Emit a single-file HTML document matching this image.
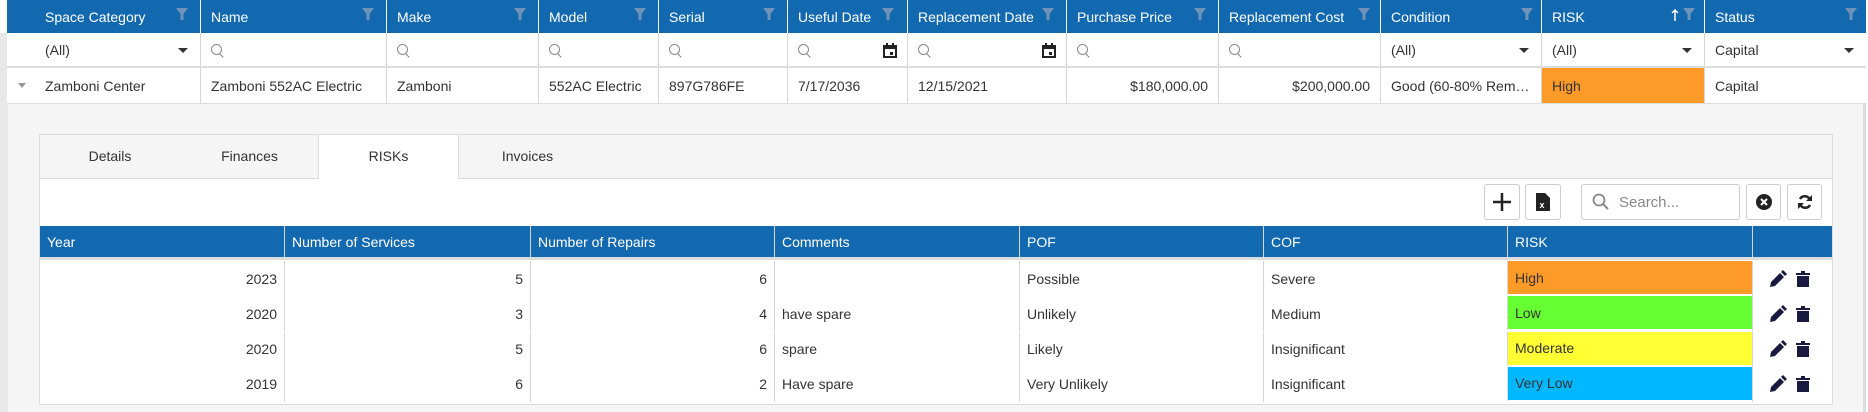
<!DOCTYPE html>
<html><head><style>
*{box-sizing:border-box;margin:0;padding:0}
body{width:1868px;height:412px;overflow:hidden;background:#fff;font-family:"Liberation Sans",sans-serif;font-size:14px;color:#333;position:relative}
.a{position:absolute}
.hd{background:#1369b0;color:#fff}
.c{position:absolute;top:0;height:100%;display:flex;align-items:center;padding-left:10px;white-space:nowrap;overflow:hidden}
.bl{border-left:1px solid #d6d6d6}
.hb{border-left:1px solid #fff}
.q{width:11px;height:11px;border:1.3px solid #888;border-radius:50%;position:relative}
.q:after{content:"";position:absolute;width:1.3px;height:5px;background:#888;left:9px;top:8px;transform:rotate(-45deg)}
.dd{position:absolute;right:12px;top:15px;border-left:5px solid transparent;border-right:5px solid transparent;border-top:5px solid #333}
.r{justify-content:flex-end;padding-right:10px}
.btn{position:absolute;top:184px;height:36px;border:1px solid #ccc;border-radius:3px;background:#fff;display:flex;align-items:center;justify-content:center}
</style></head><body>
<div class="a hd" style="left:7px;top:0;width:1859px;height:33px">
<div class="c" style="left:0;width:193px;padding-left:38px">Space Category</div>
<div class="c hb" style="left:193px;width:186px">Name</div>
<div class="c hb" style="left:379px;width:152px">Make</div>
<div class="c hb" style="left:531px;width:120px">Model</div>
<div class="c hb" style="left:651px;width:129px">Serial</div>
<div class="c hb" style="left:780px;width:120px">Useful Date</div>
<div class="c hb" style="left:900px;width:159px">Replacement Date</div>
<div class="c hb" style="left:1059px;width:152px">Purchase Price</div>
<div class="c hb" style="left:1211px;width:162px">Replacement Cost</div>
<div class="c hb" style="left:1373px;width:161px">Condition</div>
<div class="c hb" style="left:1534px;width:163px">RISK</div>
<div class="c hb" style="left:1697px;width:162px">Status</div>
</div>
<svg class="a" style="left:0;top:0" width="1868" height="33">
<g fill="#6f93b8">
<path d="M176 8h12l-4.5 6v6h-3v-6z"/><path d="M362 8h12l-4.5 6v6h-3v-6z"/><path d="M514 8h12l-4.5 6v6h-3v-6z"/><path d="M634 8h12l-4.5 6v6h-3v-6z"/><path d="M763 8h12l-4.5 6v6h-3v-6z"/><path d="M882 8h12l-4.5 6v6h-3v-6z"/><path d="M1042 8h12l-4.5 6v6h-3v-6z"/><path d="M1194 8h12l-4.5 6v6h-3v-6z"/><path d="M1358 8h12l-4.5 6v6h-3v-6z"/><path d="M1521 8h12l-4.5 6v6h-3v-6z"/><path d="M1683 8h12l-4.5 6v6h-3v-6z"/><path d="M1845 8h12l-4.5 6v6h-3v-6z"/>
</g>
<path d="M1675 10v11M1672 13l3-3 3 3" stroke="#fff" stroke-width="1.5" fill="none"/>
</svg>
<div class="a" style="left:0;top:33px;width:8px;height:379px;background:#e8e8e8"></div>
<div class="a" style="left:7px;top:33px;width:1859px;height:35px;background:#fff;border-bottom:2px solid #ddd">
<div class="c" style="left:0;width:193px;padding-left:38px">(All)<span class="dd"></span></div>
<div class="c bl" style="left:193px;width:186px"><span class="q"></span></div>
<div class="c bl" style="left:379px;width:152px"><span class="q"></span></div>
<div class="c bl" style="left:531px;width:120px"><span class="q"></span></div>
<div class="c bl" style="left:651px;width:129px"><span class="q"></span></div>
<div class="c bl" style="left:780px;width:120px"><span class="q"></span><svg style="position:absolute;right:10px;top:10px" width="14" height="15"><rect x="1" y="3" width="12" height="11" fill="none" stroke="#222" stroke-width="2"/><rect x="1" y="2" width="12" height="4" fill="#222"/><rect x="3" y="0" width="2" height="3" fill="#222"/><rect x="9" y="0" width="2" height="3" fill="#222"/><rect x="7" y="9" width="3" height="3" fill="#222"/></svg></div>
<div class="c bl" style="left:900px;width:159px"><span class="q"></span><svg style="position:absolute;right:10px;top:10px" width="14" height="15"><rect x="1" y="3" width="12" height="11" fill="none" stroke="#222" stroke-width="2"/><rect x="1" y="2" width="12" height="4" fill="#222"/><rect x="3" y="0" width="2" height="3" fill="#222"/><rect x="9" y="0" width="2" height="3" fill="#222"/><rect x="7" y="9" width="3" height="3" fill="#222"/></svg></div>
<div class="c bl" style="left:1059px;width:152px"><span class="q"></span></div>
<div class="c bl" style="left:1211px;width:162px"><span class="q"></span></div>
<div class="c bl" style="left:1373px;width:161px">(All)<span class="dd"></span></div>
<div class="c bl" style="left:1534px;width:163px">(All)<span class="dd"></span></div>
<div class="c bl" style="left:1697px;width:162px">Capital<span class="dd"></span></div>
</div>
<div class="a" style="left:7px;top:68px;width:1859px;height:36px;background:#fff;border-bottom:1px solid #ddd">
<div class="c" style="left:0;width:193px;padding-left:38px">Zamboni Center</div>
<span class="a" style="left:11px;top:15px;border-left:4px solid transparent;border-right:4px solid transparent;border-top:5px solid #999"></span>
<div class="c bl" style="left:193px;width:186px">Zamboni 552AC Electric</div>
<div class="c bl" style="left:379px;width:152px">Zamboni</div>
<div class="c bl" style="left:531px;width:120px">552AC Electric</div>
<div class="c bl" style="left:651px;width:129px">897G786FE</div>
<div class="c bl" style="left:780px;width:120px">7/17/2036</div>
<div class="c bl" style="left:900px;width:159px">12/15/2021</div>
<div class="c bl r" style="left:1059px;width:152px">$180,000.00</div>
<div class="c bl r" style="left:1211px;width:162px">$200,000.00</div>
<div class="c bl" style="left:1373px;width:161px">Good (60-80% Rem…</div>
<div class="c bl" style="left:1534px;width:163px;background:#fe9a28">High</div>
<div class="c bl" style="left:1697px;width:162px">Capital</div>
</div>
<div class="a" style="left:8px;top:104px;width:1858px;height:308px;background:#f5f5f5;border-right:3px solid #ddd"></div>
<div class="a" style="left:39px;top:134px;width:1794px;height:271px;border:1px solid #ddd;background:#f5f5f5"></div>
<div class="a" style="left:39px;top:178px;width:1794px;height:1px;background:#ddd"></div>
<div class="a" style="left:318px;top:134px;width:141px;height:45px;background:#fff;border:1px solid #ddd;border-bottom:none"></div>
<div class="a" style="left:39px;top:148px;width:142px;text-align:center">Details</div>
<div class="a" style="left:181px;top:148px;width:137px;text-align:center">Finances</div>
<div class="a" style="left:318px;top:148px;width:141px;text-align:center">RISKs</div>
<div class="a" style="left:459px;top:148px;width:137px;text-align:center">Invoices</div>
<div class="a" style="left:40px;top:179px;width:1792px;height:47px;background:#fff"></div>
<div class="btn" style="left:1484px;width:36px"><svg width="20" height="20"><path d="M10 1v18M1 10h18" stroke="#222" stroke-width="2.5"/></svg></div>
<div class="btn" style="left:1525px;width:36px"><svg width="14" height="18"><path d="M0 0h9l5 5v13H0z" fill="#222"/><text x="3.5" y="15" font-size="9" fill="#fff" font-family="Liberation Sans" font-weight="bold">x</text></svg></div>
<div class="btn" style="left:1581px;width:159px;justify-content:flex-start;padding-left:10px;color:#888;font-size:15px"><svg width="18" height="18" style="margin-right:9px"><circle cx="7" cy="7" r="5.5" fill="none" stroke="#888" stroke-width="1.8"/><path d="M11 11l5 5" stroke="#888" stroke-width="2"/></svg>Search...</div>
<div class="btn" style="left:1746px;width:35px"><svg width="16" height="16"><circle cx="8" cy="8" r="8" fill="#222"/><path d="M5 5l6 6M11 5l-6 6" stroke="#fff" stroke-width="2"/></svg></div>
<div class="btn" style="left:1787px;width:35px"><svg width="16" height="16"><path d="M13 6A5.5 5.5 0 0 0 3 5M3 10a5.5 5.5 0 0 0 10 1" fill="none" stroke="#222" stroke-width="2.5"/><path d="M15 1v6h-6zM1 15V9h6z" fill="#222"/></svg></div>
<div class="a hd" style="left:40px;top:226px;width:1792px;height:34px;border-bottom:3px solid #ddd">
<div class="c" style="left:0;width:244px;padding-left:7px">Year</div>
<div class="c bl" style="left:244px;width:246px;padding-left:7px">Number of Services</div>
<div class="c bl" style="left:490px;width:244px;padding-left:7px">Number of Repairs</div>
<div class="c bl" style="left:734px;width:245px;padding-left:7px">Comments</div>
<div class="c bl" style="left:979px;width:244px;padding-left:7px">POF</div>
<div class="c bl" style="left:1223px;width:244px;padding-left:7px">COF</div>
<div class="c bl" style="left:1467px;width:245px;padding-left:7px">RISK</div>
<div class="c bl" style="left:1712px;width:80px"></div>
</div>
<div class="a" style="left:40px;top:260px;width:1792px;height:144px;background:#fff"></div>
<div id="rows"></div>
<script>
var d=[["2023","5","6","","Possible","Severe","High","#fe9a28"],["2020","3","4","have spare","Unlikely","Medium","Low","#66ff33"],["2020","5","6","spare","Likely","Insignificant","Moderate","#ffff33"],["2019","6","2","Have spare","Very Unlikely","Insignificant","Very Low","#00b8ff"]];
var h="";
d.forEach(function(r,i){var t=261+i*35.3;
h+='<div class="a" style="left:40px;top:'+t+'px;width:1792px;height:35px">'+
'<div class="c r" style="left:0;width:244px;padding-right:7px">'+r[0]+'</div>'+
'<div class="c bl r" style="left:244px;width:246px;padding-right:7px">'+r[1]+'</div>'+
'<div class="c bl r" style="left:490px;width:244px;padding-right:7px">'+r[2]+'</div>'+
'<div class="c bl" style="left:734px;width:245px;padding-left:7px">'+r[3]+'</div>'+
'<div class="c bl" style="left:979px;width:244px;padding-left:7px">'+r[4]+'</div>'+
'<div class="c bl" style="left:1223px;width:244px;padding-left:7px">'+r[5]+'</div>'+
'<div class="c bl" style="left:1467px;width:245px;padding-left:7px;background:'+r[7]+';border-bottom:2px solid #fff">'+r[6]+'</div>'+
'<div class="c bl" style="left:1712px;width:80px;padding-left:0"><svg width="70" height="20" style="margin-left:15px"><path d="M2 18l1-5 9-9 4 4-9 9z M13 3l2-2 4 4-2 2z" fill="#1a1a40"/><path d="M28 4h14v2H28zM33 2h4v2h-4zM29 7h12v11H29z" fill="#1a1a40"/></svg></div></div>';});
document.getElementById("rows").innerHTML=h;
</script>
</body></html>
